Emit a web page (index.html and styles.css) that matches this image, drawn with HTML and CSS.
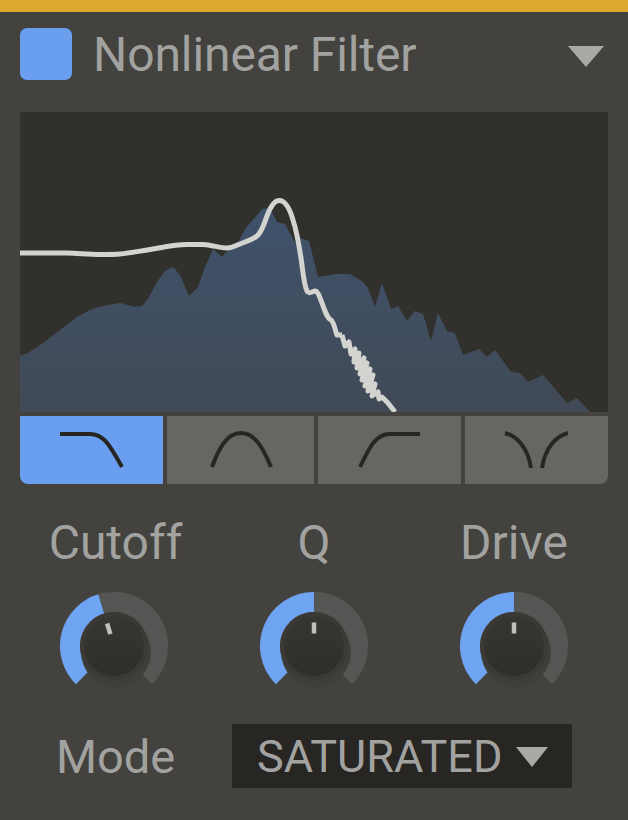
FILE: index.html
```html
<!DOCTYPE html>
<html lang="en">
<head>
    <meta charset="UTF-8">
    <meta name="viewport" content="width=device-width, initial-scale=1.0">
    <title>Nonlinear Filter</title>
    <link rel="stylesheet" href="styles.css">
</head>
<body>
    <div class="panel">
        <div class="topbar"></div>

        <div class="header">
            <div class="swatch"></div>
            <h1 class="title">Nonlinear Filter</h1>
            <svg class="arrow header-arrow" viewBox="0 0 36 21"><polygon points="0,0 36,0 18,21"/></svg>
        </div>

        <svg class="plot" viewBox="20 112 588 300">
            <defs>
                <linearGradient id="areaFill" x1="0" y1="0" x2="0" y2="1">
                    <stop offset="0" stop-color="#3f526b"/>
                    <stop offset="1" stop-color="#414a56"/>
                </linearGradient>
                <linearGradient id="knobFace" x1="0" y1="0" x2="0" y2="1">
                    <stop offset="0" stop-color="#383633"/>
                    <stop offset="1" stop-color="#302e2b"/>
                </linearGradient>
            </defs>
            <polygon fill="url(#areaFill)" points="20,412 20,355.7 28,353 43,343 60,330 77,317 92,309 107,305 120,303 135,307 142,306 148,299 157,282 165,271 173,267 180,275 189,296 198,287 205,267 213,249 222,257 230,248 238,242 246,228 262,209 270,208 277,222 285,224 295,243 300,238 309,241 318,277 337,274 350,274 363,282 368,288 375,307 382,283 391,309 398,306 407,321 415,311 423,314 431,341 438,313 447,331 455,333 463,355 479,349 487,357 495,350 511,372 520,373 528,382 543,375 567,403 577,398 590,412"/>
            <path class="curve" d="M20 253 L67 253 C80 253.500 90 254.500 100 254.500 C110 254.500 115 254.500 120 254 C130 253 140 251 150 249.500 C165 247 175 244.500 187 244.500 L203 244.500 C212 245 220 248 227 248 C232 248 236 245.500 240 244 C247 241 252 240 257 236 C262 232 264 224 267 216 C270 208 274 200.500 279 200.500 C284 200.500 289 206 293 220 C297 232 299 245 301 258 C303 272 304 285 307 291 C309 294.500 311 292 315 291 C318 291 320 298 322 303 C325 311 327 318 331 320 C334 322 335 330 337 335 L342 335"/>
            <polyline class="curve" points="342,335 345,346 349,342 351,354 355,349 354,362 359,353 357,368 364,358 360,374 367,363 362,380 370,369 365,386 373,375 368,391 375,384 372,396 378,392 379,399 382,397 388,403 395,412"/>
        </svg>

        <div class="tabs">
            <button class="tab tab-active"><svg viewBox="0 0 143 68"><path d="M40 18 L70 18 C84 18 90 30 102 51"/></svg></button>
            <button class="tab"><svg viewBox="0 0 147 68"><path d="M45 51 C52 32 60 17 74 17 C88 17 96 32 104 51"/></svg></button>
            <button class="tab"><svg viewBox="0 0 143 68"><path d="M42 51 C52 30 58 18 72 18 L102 18"/></svg></button>
            <button class="tab"><svg viewBox="0 0 143 68"><path d="M40 17 C52 20 63 32 66 52 M77 52 C80 32 91 20 103 17"/></svg></button>
        </div>

        <div class="knobs">
            <div class="knob-col">
                <div class="knob-label">Cutoff</div>
                <svg class="knob" viewBox="0 0 108 100">
                    <path class="knob-track" d="M22.890 85.110 A44 44 0 1 1 85.110 85.110"/>
                    <path class="knob-value" d="M22.890 85.110 A44 44 0 0 1 41.140 11.920"/>
                    <circle class="knob-shadow" cx="56" cy="60" r="35"/>
                    <circle class="knob-rim" cx="54" cy="54" r="34"/>
                    <circle class="knob-face" cx="54" cy="54" r="30"/>
                    <rect class="knob-pointer" x="51.750" y="30.500" width="4.500" height="11" transform="rotate(-17 54 54)"/>
                </svg>
            </div>
            <div class="knob-col">
                <div class="knob-label">Q</div>
                <svg class="knob" viewBox="0 0 108 100">
                    <path class="knob-track" d="M22.890 85.110 A44 44 0 1 1 85.110 85.110"/>
                    <path class="knob-value" d="M22.890 85.110 A44 44 0 0 1 54 10"/>
                    <circle class="knob-shadow" cx="56" cy="60" r="35"/>
                    <circle class="knob-rim" cx="54" cy="54" r="34"/>
                    <circle class="knob-face" cx="54" cy="54" r="30"/>
                    <rect class="knob-pointer" x="51.750" y="30.500" width="4.500" height="11"/>
                </svg>
            </div>
            <div class="knob-col">
                <div class="knob-label">Drive</div>
                <svg class="knob" viewBox="0 0 108 100">
                    <path class="knob-track" d="M22.890 85.110 A44 44 0 1 1 85.110 85.110"/>
                    <path class="knob-value" d="M22.890 85.110 A44 44 0 0 1 54 10"/>
                    <circle class="knob-shadow" cx="56" cy="60" r="35"/>
                    <circle class="knob-rim" cx="54" cy="54" r="34"/>
                    <circle class="knob-face" cx="54" cy="54" r="30"/>
                    <rect class="knob-pointer" x="51.750" y="30.500" width="4.500" height="11"/>
                </svg>
            </div>
        </div>

        <div class="mode-row">
            <div class="mode-label">Mode</div>
            <div class="mode-select">
                <span>SATURATED</span>
                <svg class="arrow select-arrow" viewBox="0 0 32 20"><polygon points="0,0 32,0 16,20"/></svg>
            </div>
        </div>
    </div>
</body>
</html>
```

FILE: styles.css
```css
html, body {
    margin: 0;
    height: 100%;
    background: #43423e;
}
body {
    font-family: Roboto, "Liberation Sans", sans-serif;
    color: #a2a2a0;
    overflow: hidden;
}
.panel {
    width: 628px;
    height: 820px;
    display: flex;
    flex-direction: column;
}
.topbar {
    height: 12px;
    background: #dca92f;
}
.header {
    height: 52px;
    margin: 16px 24px 32px 20px;
    display: flex;
    align-items: center;
}
.swatch {
    width: 52px;
    height: 52px;
    border-radius: 7px;
    background: #6a9eee;
}
.title {
    margin: 2px 0 0 21px;
    font-size: 48px;
    font-weight: 400;
    letter-spacing: -0.1px;
    line-height: 52px;
    flex: 1;
}
.arrow {
    display: block;
    fill: #a9a9a6;
}
.header-arrow {
    width: 36px;
    height: 21px;
    margin-top: 4px;
}
.plot {
    display: block;
    width: 588px;
    height: 300px;
    margin: 0 20px;
    background: #32302c;
}
.curve {
    fill: none;
    stroke: #d3d3cf;
    stroke-width: 5px;
    stroke-linejoin: round;
}
.tabs {
    display: grid;
    grid-template-columns: 143px 147px 143px 143px;
    gap: 4px;
    margin: 4px 20px 0;
    height: 68px;
    border-radius: 0 0 8px 8px;
    overflow: hidden;
}
.tab {
    padding: 0;
    border: 0;
    background: #686662;
}
.tab svg {
    display: block;
    width: 100%;
    height: 68px;
}
.tab path {
    fill: none;
    stroke: #272623;
    stroke-width: 4px;
}
.tab-active {
    background: #6a9eee;
}
.knobs {
    display: grid;
    grid-template-columns: repeat(3, 200px);
    margin: 32px 14px 0;
}
.knob-col {
    display: flex;
    flex-direction: column;
    align-items: center;
}
.knob-label {
    font-size: 48px;
    font-weight: 400;
    line-height: 54px;
}
.knob-col:first-child .knob-label {
    margin-left: 3px;
}
.knob {
    display: block;
    width: 108px;
    height: 100px;
    margin-top: 22px;
}
.knob-track, .knob-value {
    fill: none;
    stroke-width: 20px;
}
.knob-track {
    stroke: #555553;
}
.knob-value {
    stroke: #6ea4f2;
}
.knob-shadow {
    fill: #3f3e3a;
}
.knob-rim {
    fill: #3a3936;
}
.knob-face {
    fill: url(#knobFace);
}
.knob-pointer {
    fill: #c0c0bc;
}
.mode-row {
    display: flex;
    align-items: center;
    margin: 32px 56px 0 56px;
    height: 64px;
}
.mode-label {
    width: 176px;
    font-size: 47px;
    font-weight: 400;
}
.mode-select {
    flex: 1;
    height: 64px;
    padding-left: 25px;
    display: flex;
    align-items: center;
    background: #272622;
    font-size: 45px;
    font-weight: 400;
}
.select-arrow {
    width: 32px;
    height: 20px;
    margin: 2px 0 0 14px;
}
```
